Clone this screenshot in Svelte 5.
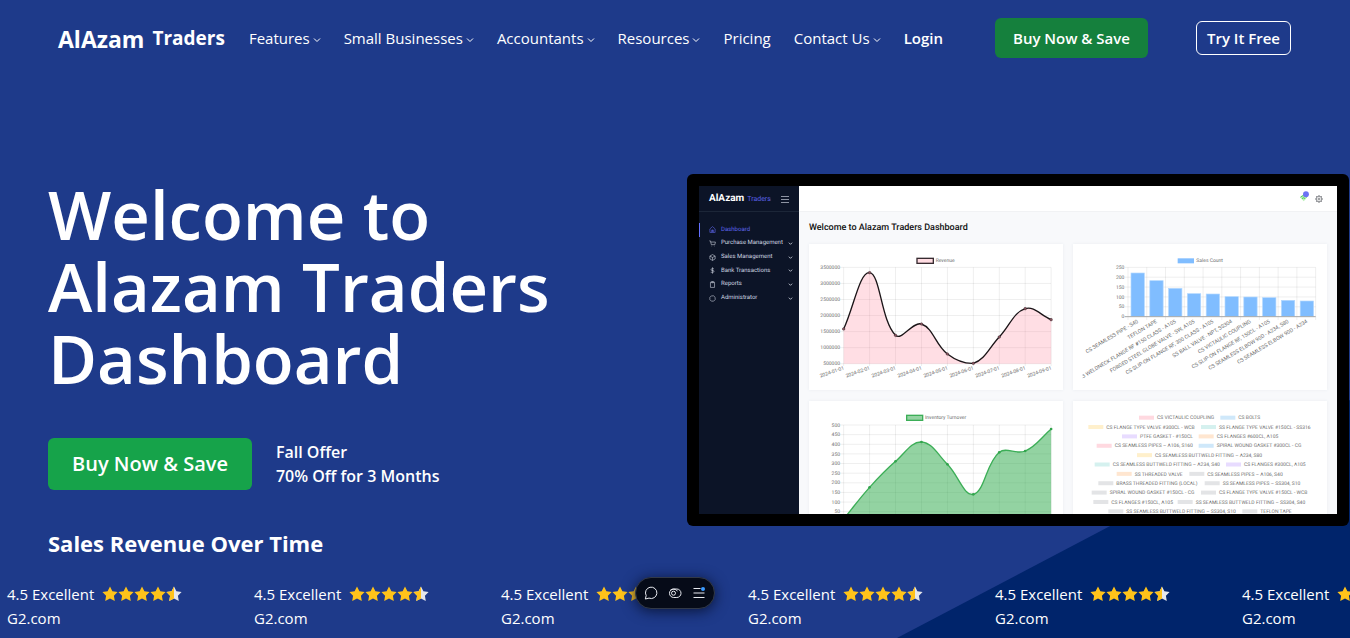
<script>
  const nav = [
    { label: 'Features', menu: true },
    { label: 'Small Businesses', menu: true },
    { label: 'Accountants', menu: true },
    { label: 'Resources', menu: true },
    { label: 'Pricing', menu: false },
    { label: 'Contact Us', menu: true },
  ];

  const sideItems = [
    { label: 'Dashboard', icon: 'home', active: true },
    { label: 'Purchase Management', icon: 'cart' },
    { label: 'Sales Management', icon: 'box' },
    { label: 'Bank Transactions', icon: 'dollar' },
    { label: 'Reports', icon: 'clipboard' },
    { label: 'Administrator', icon: 'hexagon' },
  ];

  const icons = {
    home: 'M3 10l9-8 9 8v12H3zM9 22v-8h6v8M12 13v8',
    cart: 'M1 3h4l3 13h12l2-9H6M9 20v1.5M19 20v1.5',
    box: 'M12 2l9 5v10l-9 5-9-5V7zM3 7l9 5 9-5M12 12v10',
    dollar: 'M12 1v22M17 6H10a3 3 0 000 6h4a3 3 0 010 6H6',
    clipboard: 'M5 4h14v18H5zM9 2h6v4H9z',
    hexagon: 'M8 3h8l5 5v8l-5 5H8l-5-5V8z',
  };

  // Smoothed line through the points, with handles kept inside the plot area.
  function curve(points, top, bottom, tension = 0.4) {
    const clamp = (v) => Math.max(top, Math.min(bottom, v));
    const handles = points.map((p, i) => {
      const a = points[i - 1] ?? p;
      const b = points[i + 1] ?? p;
      const d1 = Math.hypot(p[0] - a[0], p[1] - a[1]);
      const d2 = Math.hypot(b[0] - p[0], b[1] - p[1]);
      const f1 = (tension * d1) / (d1 + d2);
      const f2 = (tension * d2) / (d1 + d2);
      return {
        before: [p[0] - f1 * (b[0] - a[0]), clamp(p[1] - f1 * (b[1] - a[1]))],
        after: [p[0] + f2 * (b[0] - a[0]), clamp(p[1] + f2 * (b[1] - a[1]))],
      };
    });
    return points.reduce(
      (d, p, i) => (i === 0 ? `M${p}` : `${d} C${handles[i - 1].after} ${handles[i].before} ${p}`),
      ''
    );
  }

  const xs = Array.from({ length: 9 }, (_, i) => 104 + i * 77.8);
  const revenue = [255, 86, 274, 240, 330, 358, 279, 194, 227].map((y, i) => [xs[i], y]);
  const revenuePath = curve(revenue, 70, 359);
  const revenueTicks = [3500000, 3000000, 2500000, 2000000, 1500000, 1000000, 500000];
  const months = xs.map((_, i) => `2024-0${i + 1}-01`);

  const turnover = [354, 259, 181, 123, 190, 280, 154, 150, 84].map((y, i) => [xs[i], y]);
  const turnoverPath = curve(turnover, 70, 361);
  const turnoverTicks = [500, 450, 400, 350, 300, 250, 200, 150, 100, 50];

  const sales = [
    { label: 'CS SEAMLESS PIPE - S40', top: 87 },
    { label: 'TEFLON TAPE', top: 110 },
    { label: 'CS WELDNECK FLANGE RF #150 CLASS - A105', top: 133 },
    { label: 'FORGED STEEL GLOBE VALVE - SW, A105', top: 149 },
    { label: 'CS SLIP-ON FLANGE RF, 300 CLASS - A105', top: 150 },
    { label: 'SS BALL VALVE - NPT, SS304', top: 158 },
    { label: 'CS VICTAULIC COUPLING', top: 159 },
    { label: 'CS SLIP-ON FLANGE RF, 150CL - A105', top: 161 },
    { label: 'CS SEAMLESS ELBOW 90D - A234, S80', top: 169 },
    { label: 'CS SEAMLESS ELBOW 90D - A234', top: 171 },
  ];
  const salesTicks = [250, 200, 150, 100, 50, 0];

  const pink = '#ffd9e0', blue = '#cfe8fa', yellow = '#fff0cc', teal = '#d5f1ef';
  const purple = '#e8dcff', orange = '#ffe6d0', grey = '#e3e4e6';
  const legend = [
    [[198, pink, 'CS VICTAULIC COUPLING'], [442, blue, 'CS BOLTS']],
    [[46, yellow, 'CS FLANGE TYPE VALVE #300CL - WCB'], [384, teal, 'SS FLANGE TYPE VALVE #150CL - SS316']],
    [[147, purple, 'PTFE GASKET - #150CL'], [377, orange, 'CS FLANGES #600CL, A105']],
    [[71, pink, 'CS SEAMLESS PIPES – A106, S160'], [377, blue, 'SPIRAL WOUND GASKET #300CL - CG']],
    [[192, yellow, 'CS SEAMLESS BUTTWELD FITTING – A234, S80']],
    [[65, teal, 'CS SEAMLESS BUTTWELD FITTING – A234, S40'], [459, purple, 'CS FLANGES #300CL, A105']],
    [[131, orange, 'SS THREADED VALVE'], [349, grey, 'CS SEAMLESS PIPES – A106, S40']],
    [[76, grey, 'BRASS THREADED FITTING (LOCAL)'], [395, grey, 'SS SEAMLESS PIPES – SS304, S10']],
    [[56, grey, 'SPIRAL WOUND GASKET #150CL - CG'], [384, grey, 'CS FLANGE TYPE VALVE #150CL - WCB']],
    [[61, grey, 'CS FLANGES #150CL, A105'], [314, grey, 'SS SEAMLESS BUTTWELD FITTING – SS304, S40']],
    [[106, grey, 'SS SEAMLESS BUTTWELD FITTING – SS304, S10'], [508, grey, 'TEFLON TAPE']],
  ];

  const star = 'M8 .5l2.400 4.700 5.200.8-3.700 3.700.9 5.300L8 12.600l-4.800 2.400.9-5.300L.4 6l5.200-.8z';
  const starHalf = 'M8 .5v12.100l-4.800 2.400.9-5.300L.4 6l5.200-.8z';
  const reviews = [1, 2, 3, 4, 5, 6];
</script>

<div class="page">
  <div class="slope"></div>

  <header>
    <a class="brand" href="#home"><span class="brand-main">AlAzam</span><span class="brand-sub">Traders</span></a>
    <nav>
      {#each nav as item}
        <a href="#nav">
          {item.label}
          {#if item.menu}
            <svg class="chev" viewBox="0 0 8 8" aria-hidden="true"><path d="M1 2.500l3 3 3-3" /></svg>
          {/if}
        </a>
      {/each}
      <a class="login" href="#login">Login</a>
    </nav>
    <a class="buy-small" href="#buy">Buy Now &amp; Save</a>
    <a class="try" href="#try">Try It Free</a>
  </header>

  <main>
    <section class="intro">
      <h1>Welcome to Alazam Traders Dashboard</h1>
      <div class="offer">
        <button type="button" class="buy-big">Buy Now &amp; Save</button>
        <p>Fall Offer<br />70% Off for 3 Months</p>
      </div>
      <h2>Sales Revenue Over Time</h2>
    </section>

    <section class="device">
      <div class="screen">
        <aside>
          <div class="side-head">
            <span class="side-main">AlAzam</span><span class="side-sub">Traders</span>
            <svg class="burger" viewBox="0 0 8 8" aria-hidden="true"><path d="M0 1.500h8M0 4.500h8M0 7.500h8" /></svg>
          </div>
          <ul>
            {#each sideItems as item}
              <li class:active={item.active}>
                <svg viewBox="0 0 24 24" aria-hidden="true"><path d={icons[item.icon]} /></svg>
                <span>{item.label}</span>
                {#if !item.active}
                  <svg class="side-chev" viewBox="0 0 24 24" aria-hidden="true"><path d="M4 8l8 8 8-8" /></svg>
                {/if}
              </li>
            {/each}
          </ul>
        </aside>

        <div class="content">
          <div class="topbar">
            <svg class="signal" viewBox="0 0 24 30" aria-hidden="true">
              <path d="M0 17l10-8 9 8-9 11z" fill="#b9f0b5" />
              <path d="M1 17q9-9 17 0M5 21q5-5 9 0" fill="none" stroke="#46c758" stroke-width="2.500" />
              <circle cx="16" cy="9" r="8" fill="#6b73f3" />
            </svg>
            <svg class="gear" viewBox="0 0 24 24" aria-hidden="true">
              <circle cx="12" cy="12" r="8.500" /><circle cx="12" cy="12" r="3" />
              <path d="M12 0v4M12 20v4M0 12h4M20 12h4M3.500 3.500l3 3M17.500 17.500l3 3M3.500 20.500l3-3M17.500 6.500l3-3" />
            </svg>
          </div>
          <div class="board">
            <h3>Welcome to Alazam Traders Dashboard</h3>
            <div class="cards">
              <svg class="card" viewBox="0 0 762 438" role="img" aria-label="Revenue">
                <g class="grid">
                  {#each revenueTicks as _, i}<path d="M93 {70 + i * 48.2}H726" />{/each}
                  {#each xs as x}<path d="M{x} 70V366" />{/each}
                </g>
                <path d="{revenuePath}V359H104Z" fill="#ff8096" fill-opacity=".26" />
                <path d={revenuePath} fill="none" stroke="#1b1518" stroke-width="4" />
                {#each revenue as [x, y]}<circle cx={x} cy={y} r="4" fill="#8a5560" stroke="#1b1518" />{/each}
                <rect x="324" y="43" width="49" height="15" fill="#ffdce2" stroke="#372b30" stroke-width="4" />
                <text x="380" y="55">Revenue</text>
                {#each revenueTicks as tick, i}<text class="end" x="93" y={75 + i * 48.2}>{tick}</text>{/each}
                {#each months as month, i}
                  <text class="end" transform="translate({xs[i] + 2} 376) rotate(-19)">{month}</text>
                {/each}
              </svg>

              <svg class="card" viewBox="0 0 762 438" role="img" aria-label="Sales Count">
                <clipPath id="plot-edge"><rect x="29" y="0" width="720" height="438" /></clipPath>
                <g class="grid">
                  {#each salesTicks as _, i}<path d="M155 {70 + i * 29.6}H728" />{/each}
                  {#each [...sales, null] as _, i}<path d="M{165 + i * 56.3} 70V228" />{/each}
                </g>
                {#each sales as bar, i}
                  <rect x={174 + i * 56.4} y={bar.top} width="40" height={218 - bar.top} fill="#80bdff" stroke="#b3d8ff" stroke-width="2" />
                {/each}
                <path d="M155 218H728" stroke="#aaa" stroke-width="3" />
                <rect x="314" y="43" width="49" height="15" fill="#80bdff" />
                <text x="370" y="55">Sales Count</text>
                {#each salesTicks as tick, i}<text class="end" x="154" y={75 + i * 29.6}>{tick}</text>{/each}
                <g clip-path="url(#plot-edge)">
                  {#each sales as bar, i}
                    <text class="end slanted" transform="translate({197 + i * 56.4} 235) rotate(-31)">{bar.label}</text>
                  {/each}
                </g>
              </svg>

              <svg class="card" viewBox="0 0 762 438" role="img" aria-label="Inventory Turnover">
                <g class="grid">
                  {#each turnoverTicks as _, i}<path d="M93 {72 + i * 28.9}H726" />{/each}
                  {#each xs as x}<path d="M{x} 72V366" />{/each}
                </g>
                <path d="{turnoverPath}V361H104Z" fill="#28a745" fill-opacity=".5" />
                <path d={turnoverPath} fill="none" stroke="#3cae57" stroke-width="4" />
                {#each turnover as [x, y]}<circle cx={x} cy={y} r="4" fill="#32a44d" />{/each}
                <rect x="293" y="43" width="48" height="15" fill="#94d3a2" stroke="#3cae57" stroke-width="4" />
                <text x="348" y="55">Inventory Turnover</text>
                {#each turnoverTicks as tick, i}<text class="end" x="93" y={77 + i * 28.9}>{tick}</text>{/each}
              </svg>

              <svg class="card" viewBox="0 0 762 438" role="img" aria-label="Products">
                {#each legend as row, r}
                  {#each row as [x, color, label]}
                    <rect {x} y={44 + r * 28.1} width="45" height="12" fill={color} />
                    <text x={x + 54} y={55 + r * 28.1}>{label}</text>
                  {/each}
                {/each}
              </svg>
            </div>
          </div>
        </div>
      </div>
    </section>
  </main>

  <div class="reviews">
    {#each reviews as _}
      <div class="review">
        <div class="score">
          <span>4.5 Excellent</span>
          <span class="stars">
            {#each [1, 2, 3, 4, 5] as n}
              <svg viewBox="0 0 16 16" aria-hidden="true">
                <path d={star} fill={n === 5 ? '#e5e7eb' : '#ffc31a'} />
                {#if n === 5}<path d={starHalf} fill="#ffc31a" />{/if}
              </svg>
            {/each}
          </span>
        </div>
        <span>G2.com</span>
      </div>
    {/each}
  </div>

  <div class="toolbar">
    <button type="button" aria-label="Comments">
      <svg viewBox="0 0 16 16"><path d="M2.300 14l.9-3.400A5.700 5.700 0 1 1 6 13.100z" /></svg>
    </button>
    <button type="button" aria-label="Visibility">
      <svg viewBox="0 0 16 16"><rect x="2.500" y="4" width="11.500" height="8.500" rx="4.200" /><circle cx="6.500" cy="8.200" r="2" /><path d="M3 5.500q4-3 7.500.5" /></svg>
    </button>
    <button type="button" aria-label="Menu">
      <svg viewBox="0 0 16 16"><path d="M2.500 3.500h7M2.500 8h11M2.500 12.500h11" /><circle class="dot" cx="12" cy="4" r="2" /></svg>
    </button>
  </div>
</div>

<style>
  :global(body) { margin: 0; background: #1e3a8a; }
  .page {
    position: relative;
    min-height: 100vh;
    overflow: hidden;
    background: #1e3a8a;
    color: #fff;
    font: 15px/24px "Segoe UI", "Open Sans", "Noto Sans", sans-serif;
  }
  .page > * { box-sizing: border-box; }
  a { color: inherit; text-decoration: none; white-space: nowrap; }
  h1, h2, h3, p, ul { margin: 0; padding: 0; }
  button { font: inherit; color: inherit; border: 0; cursor: pointer; }

  .slope {
    position: absolute;
    right: 0;
    bottom: 0;
    width: 453px;
    height: 238px;
    background: #00246b;
    clip-path: polygon(100% 0, 100% 100%, 0 100%);
  }

  header { position: relative; display: flex; align-items: center; height: 76px; padding: 0 59px 0 58px; }
  .brand { display: flex; align-items: center; gap: 8px; font-weight: 700; margin-right: 24px; }
  .brand-main { font-size: 23px; line-height: 30px; padding-top: 2px; }
  .brand-sub { font-size: 19px; }
  nav { display: flex; align-items: center; gap: 23px; }
  nav a { display: flex; align-items: center; gap: 3px; }
  .chev { width: 8px; height: 8px; margin-top: 4px; fill: none; stroke: #fff; stroke-width: 1; }
  .login { font-weight: 600; }
  .buy-small { margin-left: auto; padding: 8px 18px; border-radius: 6px; background: #15803d; font-weight: 600; }
  .try { margin-left: 48px; padding: 4px 10px; border: 1px solid #fff; border-radius: 6px; font-weight: 600; }

  main {
    position: relative;
    display: grid;
    grid-template-columns: minmax(0, 1fr) calc(50vw - 13px);
    padding: 98px 1px 0 48px;
  }
  .intro { padding-top: 4px; }
  h1 { max-width: 560px; font-size: 67px; line-height: 72px; font-weight: 600; }
  .offer { display: flex; align-items: center; gap: 24px; margin-top: 44px; }
  .buy-big { padding: 12px 24px; border-radius: 6px; background: #16a34a; font-size: 20px; line-height: 28px; font-weight: 600; }
  .offer p { font-size: 16px; font-weight: 600; }
  h2 { margin-top: 37px; font-size: 22px; line-height: 32px; font-weight: 700; }

  .device { align-self: start; padding: 12px; border-radius: 6px; background: #000; }
  .screen {
    display: grid;
    grid-template-columns: 100px minmax(0, 1fr);
    aspect-ratio: 638 / 328;
    overflow: hidden;
    background: #f8f9fb;
    color: #111;
    font-family: Roboto, sans-serif;
    text-rendering: geometricPrecision;
  }
  .screen > * { min-height: 0; }
  aside { background: #0c1427; color: #d0d6e1; }
  .side-head { display: flex; align-items: center; height: 25px; padding: 0 10px; border-bottom: 1px solid #1c2638; line-height: 10px; }
  .side-main { color: #fff; font-size: 10px; font-weight: 700; }
  .side-sub { margin-left: 3px; padding-top: 1px; color: #5a60e8; font-size: 7px; }
  .burger { width: 8px; height: 8px; margin-left: auto; stroke: #8d93a2; stroke-width: 1; }
  ul { display: grid; grid-auto-rows: 1fr; height: 82px; margin-top: 11px; list-style: none; }
  li { display: flex; align-items: center; padding: 0 10px; gap: 5px; font-size: 6px; line-height: 10px; white-space: nowrap; }
  li svg { flex: none; width: 7px; height: 7px; fill: none; stroke: currentColor; stroke-width: 2; }
  li.active { padding-left: 9px; border-left: 1px solid #6571ff; color: #5f67f0; }
  li .side-chev { width: 5px; height: 5px; margin-left: auto; stroke-width: 4; }
  li:not(.active) { gap: 5px; padding-right: 11px; }
  li span { flex: 0 1 auto; min-width: 0; }

  .topbar { display: flex; align-items: center; justify-content: flex-end; gap: 6px; height: 25px; padding-right: 14px; background: #fff; border-bottom: 1px solid #f1f2f4; }
  .signal { width: 9px; height: 11px; margin-bottom: 4px; }
  .gear { width: 8px; height: 8px; fill: none; stroke: #55585e; stroke-width: 2; }
  .board { padding: 9px 10px; }
  h3 { font-size: 9px; line-height: 14px; font-weight: 500; }
  .cards { display: grid; grid-template-columns: repeat(2, minmax(0, 1fr)); gap: 11px 10px; margin-top: 9px; }
  .card { display: block; width: 100%; background: #fff; box-shadow: 0 0 3px #e9ecf2; }
  .card text { font-family: Roboto, sans-serif; font-size: 15px; fill: #6c6c6c; }
  .card .end { text-anchor: end; }
  .card .slanted { font-size: 16px; }
  .grid path { stroke: #000; stroke-opacity: .1; stroke-width: 2; }

  .reviews { position: relative; display: flex; gap: 64px; margin-top: 23px; padding: 0 0 8px 7px; }
  .review { flex: none; width: 183px; }
  .score { display: flex; align-items: center; gap: 8px; white-space: nowrap; }
  .stars { display: flex; }
  .stars svg { width: 16px; height: 16px; }

  .toolbar {
    position: fixed;
    left: 50%;
    bottom: 29px;
    display: flex;
    gap: 8px;
    padding: 7px;
    border: 1px solid #323947;
    border-radius: 17px;
    background: #060b18;
    box-shadow: 0 2px 14px #0a163a;
    transform: translateX(-50%);
  }
  .toolbar button { display: block; width: 16px; height: 16px; padding: 0; background: none; }
  .toolbar svg { display: block; width: 16px; height: 16px; fill: none; stroke: #e8eaf0; stroke-width: 1; }
  .toolbar .dot { fill: #3b9bff; stroke: none; }
</style>
